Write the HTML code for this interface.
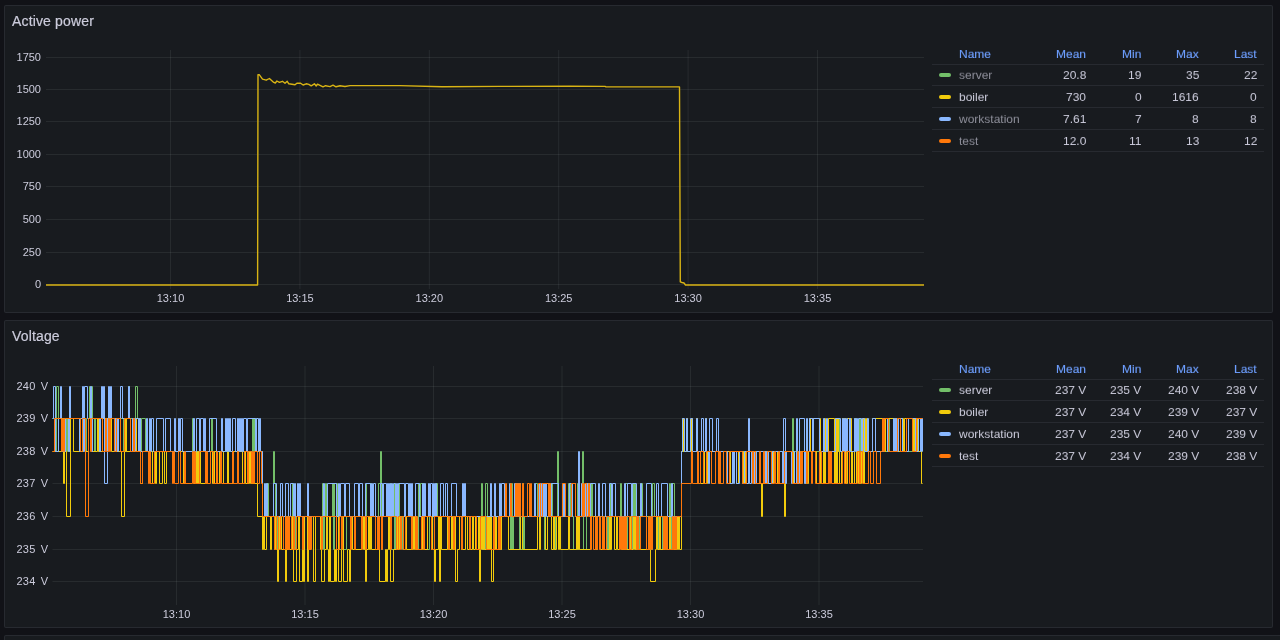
<!DOCTYPE html><html><head><meta charset="utf-8"><style>
html,body{margin:0;padding:0;}
body{width:1280px;height:640px;overflow:hidden;background:#111217;position:relative;font-family:"Liberation Sans",sans-serif;}
.lg,.title,svg{will-change:transform;}
.panel{position:absolute;left:4px;width:1269px;height:308px;box-sizing:border-box;border:1px solid rgba(204,204,220,0.09);border-radius:2px;background:#181b1f;}
.title{position:absolute;left:12px;font-size:14px;color:#ccccdc;line-height:14px;white-space:nowrap;letter-spacing:0.15px;-webkit-text-stroke:0.2px #ccccdc;}
.lg{position:absolute;font-size:12px;line-height:14px;color:#ccccdc;white-space:nowrap;transform:scaleY(0.9);transform-origin:0 11px;}
.lg.r{text-align:right;}
.hdr{color:#6e9fff;-webkit-text-stroke:0.15px #6e9fff;}
.rowline{position:absolute;left:932px;width:332px;height:1px;background:rgba(204,204,220,0.09);}
.sw{position:absolute;left:939px;width:12px;height:4px;border-radius:2px;}
svg{position:absolute;left:0;top:0;}
.ax{font-size:11px;fill:#ccccdc;font-family:"Liberation Sans",sans-serif;}
</style></head><body>

<div class="panel" style="top:5px"></div>
<div class="panel" style="top:320px"></div>
<div class="panel" style="top:635px;width:1300px"></div>
<div class="title" style="top:14px">Active power</div>
<div class="title" style="top:329px">Voltage</div>
<div class="lg hdr" style="left:959px;top:46.5px">Name</div>
<div class="lg hdr r" style="right:193.5px;top:46.5px">Mean</div>
<div class="lg hdr r" style="right:138.70000000000005px;top:46.5px">Min</div>
<div class="lg hdr r" style="right:81px;top:46.5px">Max</div>
<div class="lg hdr r" style="right:23px;top:46.5px">Last</div>
<div class="rowline" style="top:64.0px"></div>
<div class="rowline" style="top:85.0px"></div>
<div class="rowline" style="top:107.0px"></div>
<div class="rowline" style="top:129.0px"></div>
<div class="rowline" style="top:151.0px"></div>
<div class="sw" style="top:73.0px;background:#73bf69"></div>
<div class="lg" style="left:959px;top:67.8px;color:rgba(204,204,220,0.65)">server</div>
<div class="lg r" style="right:193.5px;top:67.8px">20.8</div>
<div class="lg r" style="right:138.70000000000005px;top:67.8px">19</div>
<div class="lg r" style="right:81px;top:67.8px">35</div>
<div class="lg r" style="right:23px;top:67.8px">22</div>
<div class="sw" style="top:94.9px;background:#f2cc0c"></div>
<div class="lg" style="left:959px;top:89.7px;color:#ccccdc">boiler</div>
<div class="lg r" style="right:193.5px;top:89.7px">730</div>
<div class="lg r" style="right:138.70000000000005px;top:89.7px">0</div>
<div class="lg r" style="right:81px;top:89.7px">1616</div>
<div class="lg r" style="right:23px;top:89.7px">0</div>
<div class="sw" style="top:116.8px;background:#8ab8ff"></div>
<div class="lg" style="left:959px;top:111.6px;color:rgba(204,204,220,0.65)">workstation</div>
<div class="lg r" style="right:193.5px;top:111.6px">7.61</div>
<div class="lg r" style="right:138.70000000000005px;top:111.6px">7</div>
<div class="lg r" style="right:81px;top:111.6px">8</div>
<div class="lg r" style="right:23px;top:111.6px">8</div>
<div class="sw" style="top:138.7px;background:#ff780a"></div>
<div class="lg" style="left:959px;top:133.5px;color:rgba(204,204,220,0.65)">test</div>
<div class="lg r" style="right:193.5px;top:133.5px">12.0</div>
<div class="lg r" style="right:138.70000000000005px;top:133.5px">11</div>
<div class="lg r" style="right:81px;top:133.5px">13</div>
<div class="lg r" style="right:23px;top:133.5px">12</div>
<div class="lg hdr" style="left:959px;top:361.5px">Name</div>
<div class="lg hdr r" style="right:193.5px;top:361.5px">Mean</div>
<div class="lg hdr r" style="right:138.70000000000005px;top:361.5px">Min</div>
<div class="lg hdr r" style="right:81px;top:361.5px">Max</div>
<div class="lg hdr r" style="right:23px;top:361.5px">Last</div>
<div class="rowline" style="top:379.0px"></div>
<div class="rowline" style="top:400.0px"></div>
<div class="rowline" style="top:422.0px"></div>
<div class="rowline" style="top:444.0px"></div>
<div class="rowline" style="top:466.0px"></div>
<div class="sw" style="top:388.0px;background:#73bf69"></div>
<div class="lg" style="left:959px;top:382.8px;color:#ccccdc">server</div>
<div class="lg r" style="right:193.5px;top:382.8px">237 V</div>
<div class="lg r" style="right:138.70000000000005px;top:382.8px">235 V</div>
<div class="lg r" style="right:81px;top:382.8px">240 V</div>
<div class="lg r" style="right:23px;top:382.8px">238 V</div>
<div class="sw" style="top:409.9px;background:#f2cc0c"></div>
<div class="lg" style="left:959px;top:404.7px;color:#ccccdc">boiler</div>
<div class="lg r" style="right:193.5px;top:404.7px">237 V</div>
<div class="lg r" style="right:138.70000000000005px;top:404.7px">234 V</div>
<div class="lg r" style="right:81px;top:404.7px">239 V</div>
<div class="lg r" style="right:23px;top:404.7px">237 V</div>
<div class="sw" style="top:431.8px;background:#8ab8ff"></div>
<div class="lg" style="left:959px;top:426.6px;color:#ccccdc">workstation</div>
<div class="lg r" style="right:193.5px;top:426.6px">237 V</div>
<div class="lg r" style="right:138.70000000000005px;top:426.6px">235 V</div>
<div class="lg r" style="right:81px;top:426.6px">240 V</div>
<div class="lg r" style="right:23px;top:426.6px">239 V</div>
<div class="sw" style="top:453.7px;background:#ff780a"></div>
<div class="lg" style="left:959px;top:448.5px;color:#ccccdc">test</div>
<div class="lg r" style="right:193.5px;top:448.5px">237 V</div>
<div class="lg r" style="right:138.70000000000005px;top:448.5px">234 V</div>
<div class="lg r" style="right:81px;top:448.5px">239 V</div>
<div class="lg r" style="right:23px;top:448.5px">238 V</div>
<svg width="1280" height="640" viewBox="0 0 1280 640"><line x1="46" x2="924" y1="57.5" y2="57.5" stroke="rgba(240,250,255,0.07)" stroke-width="1"/><text x="41" y="61.1" text-anchor="end" class="ax">1750</text><line x1="46" x2="924" y1="89.5" y2="89.5" stroke="rgba(240,250,255,0.07)" stroke-width="1"/><text x="41" y="93.1" text-anchor="end" class="ax">1500</text><line x1="46" x2="924" y1="121.5" y2="121.5" stroke="rgba(240,250,255,0.07)" stroke-width="1"/><text x="41" y="125.1" text-anchor="end" class="ax">1250</text><line x1="46" x2="924" y1="154.5" y2="154.5" stroke="rgba(240,250,255,0.07)" stroke-width="1"/><text x="41" y="158.1" text-anchor="end" class="ax">1000</text><line x1="46" x2="924" y1="186.5" y2="186.5" stroke="rgba(240,250,255,0.07)" stroke-width="1"/><text x="41" y="190.1" text-anchor="end" class="ax">750</text><line x1="46" x2="924" y1="219.5" y2="219.5" stroke="rgba(240,250,255,0.07)" stroke-width="1"/><text x="41" y="223.1" text-anchor="end" class="ax">500</text><line x1="46" x2="924" y1="252.5" y2="252.5" stroke="rgba(240,250,255,0.07)" stroke-width="1"/><text x="41" y="256.1" text-anchor="end" class="ax">250</text><line x1="46" x2="924" y1="284.5" y2="284.5" stroke="rgba(240,250,255,0.07)" stroke-width="1"/><text x="41" y="288.1" text-anchor="end" class="ax">0</text><line x1="170.5" x2="170.5" y1="50" y2="289" stroke="rgba(240,250,255,0.07)" stroke-width="1"/><text x="170.5" y="302" text-anchor="middle" class="ax">13:10</text><line x1="299.9" x2="299.9" y1="50" y2="289" stroke="rgba(240,250,255,0.07)" stroke-width="1"/><text x="299.9" y="302" text-anchor="middle" class="ax">13:15</text><line x1="429.3" x2="429.3" y1="50" y2="289" stroke="rgba(240,250,255,0.07)" stroke-width="1"/><text x="429.3" y="302" text-anchor="middle" class="ax">13:20</text><line x1="558.7" x2="558.7" y1="50" y2="289" stroke="rgba(240,250,255,0.07)" stroke-width="1"/><text x="558.7" y="302" text-anchor="middle" class="ax">13:25</text><line x1="688.1" x2="688.1" y1="50" y2="289" stroke="rgba(240,250,255,0.07)" stroke-width="1"/><text x="688.1" y="302" text-anchor="middle" class="ax">13:30</text><line x1="817.5" x2="817.5" y1="50" y2="289" stroke="rgba(240,250,255,0.07)" stroke-width="1"/><text x="817.5" y="302" text-anchor="middle" class="ax">13:35</text><path d="M46.0,285.0 L257.6,285.0 L258.0,74.6 L259.4,74.8 L262.5,79.1 L266.2,80.2 L269.4,78.5 L273.8,82.4 L275.3,83.0 L276.9,81.0 L279.4,82.4 L282.5,81.3 L285.0,83.2 L287.2,81.3 L288.8,83.8 L295.0,84.8 L296.9,83.2 L300.6,83.2 L303.1,85.0 L306.2,83.8 L308.8,84.4 L311.2,85.9 L314.4,83.8 L316.2,86.0 L317.5,84.1 L323.0,86.9 L325.6,85.7 L330.0,86.6 L333.0,85.2 L336.0,86.8 L340.0,85.8 L345.0,86.5 L350.0,85.6 L400.0,85.6 L442.0,86.8 L500.0,86.4 L570.0,86.2 L605.0,86.4 L606.0,86.9 L679.5,86.9 L680.3,281.8 L682.0,282.5 L684.0,283.0 L685.5,285.0 L924.0,285.0" fill="none" stroke="#d9b414" stroke-width="1.4" stroke-linejoin="round"/><line x1="52.5" x2="923" y1="386.5" y2="386.5" stroke="rgba(240,250,255,0.07)" stroke-width="1"/><text x="48.3" y="389.9" text-anchor="end" class="ax" style="letter-spacing:0.3px;word-spacing:1.6px">240 V</text><line x1="52.5" x2="923" y1="418.5" y2="418.5" stroke="rgba(240,250,255,0.07)" stroke-width="1"/><text x="48.3" y="421.9" text-anchor="end" class="ax" style="letter-spacing:0.3px;word-spacing:1.6px">239 V</text><line x1="52.5" x2="923" y1="451.5" y2="451.5" stroke="rgba(240,250,255,0.07)" stroke-width="1"/><text x="48.3" y="454.9" text-anchor="end" class="ax" style="letter-spacing:0.3px;word-spacing:1.6px">238 V</text><line x1="52.5" x2="923" y1="483.5" y2="483.5" stroke="rgba(240,250,255,0.07)" stroke-width="1"/><text x="48.3" y="486.9" text-anchor="end" class="ax" style="letter-spacing:0.3px;word-spacing:1.6px">237 V</text><line x1="52.5" x2="923" y1="516.5" y2="516.5" stroke="rgba(240,250,255,0.07)" stroke-width="1"/><text x="48.3" y="519.9" text-anchor="end" class="ax" style="letter-spacing:0.3px;word-spacing:1.6px">236 V</text><line x1="52.5" x2="923" y1="549.5" y2="549.5" stroke="rgba(240,250,255,0.07)" stroke-width="1"/><text x="48.3" y="552.9" text-anchor="end" class="ax" style="letter-spacing:0.3px;word-spacing:1.6px">235 V</text><line x1="52.5" x2="923" y1="581.5" y2="581.5" stroke="rgba(240,250,255,0.07)" stroke-width="1"/><text x="48.3" y="584.9" text-anchor="end" class="ax" style="letter-spacing:0.3px;word-spacing:1.6px">234 V</text><line x1="176.5" x2="176.5" y1="366" y2="605" stroke="rgba(240,250,255,0.07)" stroke-width="1"/><text x="176.5" y="618" text-anchor="middle" class="ax">13:10</text><line x1="305.0" x2="305.0" y1="366" y2="605" stroke="rgba(240,250,255,0.07)" stroke-width="1"/><text x="305.0" y="618" text-anchor="middle" class="ax">13:15</text><line x1="433.5" x2="433.5" y1="366" y2="605" stroke="rgba(240,250,255,0.07)" stroke-width="1"/><text x="433.5" y="618" text-anchor="middle" class="ax">13:20</text><line x1="562.0" x2="562.0" y1="366" y2="605" stroke="rgba(240,250,255,0.07)" stroke-width="1"/><text x="562.0" y="618" text-anchor="middle" class="ax">13:25</text><line x1="690.5" x2="690.5" y1="366" y2="605" stroke="rgba(240,250,255,0.07)" stroke-width="1"/><text x="690.5" y="618" text-anchor="middle" class="ax">13:30</text><line x1="819.0" x2="819.0" y1="366" y2="605" stroke="rgba(240,250,255,0.07)" stroke-width="1"/><text x="819.0" y="618" text-anchor="middle" class="ax">13:35</text><g fill="none" stroke-width="1"><path d="M52.5,418.5H54.5V451.5H56.5V386.5H58.5V451.5H58.5V418.5H61.5V451.5H62.5V418.5H66.5V451.5H67.5V418.5H68.5V451.5H70.5V418.5H86.5V451.5H88.5V418.5H89.5V386.5H90.5V418.5H91.5V386.5H92.5V418.5H94.5V451.5H95.5V418.5H98.5V451.5H99.5V418.5H123.5V451.5H126.5V418.5H128.5V386.5H129.5V418.5H135.5V386.5H137.5V418.5H140.5V451.5H141.5V418.5H145.5V451.5H192.5V418.5H193.5V451.5H211.5V418.5H212.5V451.5H252.5V418.5H253.5V451.5H254.5V418.5H256.5V451.5H262.5V516.5H266.5V483.5H268.5V516.5H273.5V451.5H274.5V483.5H275.5V516.5H277.5V549.5H279.5V516.5H292.5V483.5H293.5V549.5H295.5V516.5H322.5V483.5H323.5V549.5H324.5V516.5H325.5V483.5H326.5V516.5H332.5V483.5H333.5V549.5H334.5V483.5H337.5V516.5H338.5V549.5H341.5V516.5H342.5V549.5H346.5V516.5H364.5V549.5H365.5V516.5H366.5V483.5H371.5V516.5H378.5V483.5H380.5V451.5H381.5V549.5H382.5V516.5H390.5V483.5H391.5V549.5H394.5V483.5H395.5V549.5H396.5V516.5H398.5V483.5H399.5V516.5H402.5V549.5H403.5V516.5H416.5V549.5H418.5V483.5H419.5V516.5H420.5V483.5H424.5V549.5H429.5V516.5H435.5V483.5H437.5V516.5H481.5V483.5H482.5V549.5H485.5V483.5H487.5V549.5H491.5V516.5H498.5V549.5H501.5V516.5H510.5V549.5H511.5V483.5H512.5V549.5H513.5V516.5H519.5V549.5H522.5V483.5H523.5V549.5H524.5V516.5H535.5V483.5H537.5V516.5H543.5V483.5H544.5V549.5H545.5V483.5H549.5V516.5H550.5V483.5H552.5V516.5H553.5V549.5H555.5V516.5H557.5V451.5H558.5V516.5H568.5V483.5H570.5V516.5H573.5V549.5H577.5V483.5H578.5V549.5H579.5V516.5H582.5V451.5H583.5V549.5H586.5V483.5H590.5V516.5H591.5V483.5H592.5V516.5H595.5V549.5H596.5V516.5H607.5V549.5H608.5V516.5H609.5V549.5H610.5V483.5H611.5V516.5H620.5V483.5H621.5V516.5H622.5V549.5H623.5V516.5H624.5V549.5H625.5V483.5H627.5V549.5H632.5V483.5H633.5V516.5H634.5V483.5H635.5V549.5H636.5V516.5H639.5V549.5H640.5V483.5H642.5V516.5H651.5V549.5H652.5V483.5H654.5V516.5H658.5V549.5H662.5V516.5H667.5V549.5H669.5V483.5H670.5V549.5H671.5V483.5H674.5V549.5H676.5V516.5H681.5V451.5H792.5V418.5H793.5V451.5H838.5V418.5H839.5V451.5H854.5V418.5H856.5V451.5H859.5V418.5H860.5V451.5H887.5V418.5H889.5V451.5H922.5" stroke="#73bf69"/><path d="M52.5,451.5H62.5V418.5H63.5V483.5H64.5V451.5H66.5V516.5H70.5V418.5H73.5V451.5H83.5V418.5H85.5V451.5H88.5V418.5H91.5V451.5H97.5V418.5H98.5V451.5H104.5V418.5H111.5V451.5H121.5V516.5H124.5V418.5H124.5V451.5H125.5V418.5H126.5V451.5H135.5V418.5H136.5V451.5H139.5V418.5H140.5V483.5H142.5V451.5H150.5V483.5H152.5V451.5H155.5V483.5H156.5V451.5H159.5V483.5H162.5V451.5H164.5V483.5H166.5V451.5H183.5V483.5H185.5V451.5H193.5V483.5H195.5V451.5H196.5V483.5H197.5V451.5H198.5V483.5H199.5V451.5H200.5V483.5H205.5V451.5H206.5V483.5H207.5V451.5H212.5V483.5H214.5V451.5H216.5V483.5H219.5V451.5H223.5V483.5H227.5V451.5H228.5V483.5H233.5V451.5H242.5V483.5H244.5V451.5H245.5V483.5H249.5V451.5H250.5V483.5H257.5V516.5H262.5V549.5H263.5V516.5H264.5V549.5H266.5V516.5H270.5V549.5H271.5V516.5H274.5V549.5H275.5V516.5H276.5V549.5H277.5V581.5H278.5V549.5H279.5V516.5H281.5V549.5H285.5V581.5H286.5V549.5H288.5V516.5H289.5V549.5H292.5V516.5H293.5V581.5H296.5V549.5H298.5V516.5H299.5V581.5H302.5V549.5H303.5V581.5H304.5V516.5H307.5V581.5H308.5V516.5H309.5V549.5H310.5V516.5H313.5V581.5H315.5V516.5H320.5V549.5H321.5V581.5H324.5V549.5H326.5V516.5H327.5V549.5H328.5V581.5H329.5V516.5H330.5V581.5H334.5V549.5H335.5V581.5H336.5V516.5H338.5V581.5H341.5V549.5H342.5V516.5H343.5V581.5H347.5V549.5H349.5V581.5H350.5V516.5H352.5V549.5H361.5V516.5H363.5V549.5H364.5V516.5H365.5V581.5H366.5V549.5H368.5V516.5H369.5V549.5H370.5V516.5H371.5V549.5H378.5V516.5H379.5V581.5H385.5V549.5H386.5V581.5H387.5V549.5H388.5V516.5H389.5V549.5H390.5V581.5H393.5V549.5H396.5V516.5H397.5V549.5H399.5V516.5H403.5V549.5H405.5V516.5H406.5V549.5H413.5V516.5H414.5V549.5H415.5V516.5H416.5V549.5H422.5V516.5H423.5V549.5H427.5V516.5H431.5V549.5H432.5V516.5H434.5V581.5H435.5V549.5H438.5V516.5H439.5V581.5H440.5V516.5H441.5V549.5H447.5V516.5H448.5V549.5H451.5V516.5H452.5V549.5H454.5V516.5H455.5V581.5H457.5V549.5H459.5V516.5H461.5V549.5H465.5V516.5H467.5V549.5H472.5V516.5H473.5V549.5H475.5V516.5H476.5V549.5H478.5V516.5H479.5V581.5H480.5V549.5H481.5V516.5H482.5V549.5H483.5V516.5H484.5V549.5H486.5V516.5H487.5V549.5H488.5V516.5H489.5V549.5H490.5V516.5H491.5V581.5H493.5V549.5H495.5V516.5H496.5V549.5H499.5V516.5H500.5V549.5H501.5V516.5H508.5V549.5H520.5V516.5H522.5V549.5H537.5V516.5H539.5V549.5H540.5V516.5H545.5V549.5H547.5V516.5H551.5V549.5H553.5V516.5H554.5V549.5H556.5V516.5H558.5V549.5H559.5V516.5H560.5V549.5H568.5V516.5H569.5V549.5H576.5V516.5H577.5V549.5H578.5V516.5H579.5V549.5H590.5V516.5H596.5V549.5H597.5V516.5H600.5V549.5H609.5V516.5H610.5V549.5H611.5V516.5H614.5V549.5H616.5V516.5H617.5V549.5H619.5V516.5H621.5V549.5H630.5V516.5H631.5V549.5H633.5V516.5H634.5V549.5H635.5V516.5H636.5V549.5H637.5V516.5H638.5V549.5H648.5V516.5H649.5V549.5H650.5V581.5H655.5V549.5H656.5V516.5H657.5V549.5H659.5V516.5H660.5V549.5H665.5V516.5H666.5V549.5H669.5V516.5H670.5V549.5H672.5V516.5H673.5V549.5H676.5V516.5H677.5V549.5H678.5V516.5H679.5V549.5H681.5V451.5H682.5V418.5H683.5V451.5H686.5V418.5H687.5V451.5H691.5V418.5H692.5V451.5H696.5V418.5H697.5V483.5H698.5V451.5H700.5V483.5H704.5V451.5H705.5V418.5H706.5V483.5H707.5V451.5H719.5V483.5H720.5V451.5H730.5V483.5H732.5V451.5H736.5V483.5H738.5V451.5H743.5V483.5H745.5V451.5H746.5V483.5H748.5V451.5H753.5V483.5H754.5V451.5H756.5V483.5H761.5V516.5H762.5V483.5H764.5V451.5H766.5V483.5H768.5V451.5H771.5V483.5H773.5V451.5H777.5V483.5H784.5V516.5H785.5V451.5H793.5V483.5H796.5V451.5H797.5V483.5H801.5V451.5H805.5V483.5H806.5V451.5H807.5V483.5H808.5V451.5H809.5V418.5H810.5V451.5H812.5V418.5H813.5V451.5H816.5V483.5H819.5V418.5H820.5V483.5H821.5V451.5H823.5V483.5H824.5V418.5H825.5V483.5H828.5V418.5H834.5V483.5H835.5V418.5H836.5V483.5H837.5V418.5H838.5V451.5H839.5V483.5H841.5V451.5H842.5V418.5H843.5V451.5H844.5V418.5H845.5V483.5H847.5V418.5H851.5V483.5H852.5V451.5H854.5V483.5H856.5V451.5H858.5V483.5H861.5V451.5H862.5V418.5H863.5V483.5H864.5V418.5H865.5V451.5H866.5V418.5H867.5V451.5H872.5V418.5H883.5V451.5H885.5V418.5H887.5V451.5H888.5V418.5H894.5V451.5H895.5V418.5H896.5V451.5H900.5V418.5H903.5V451.5H904.5V418.5H913.5V451.5H914.5V418.5H917.5V451.5H920.5V418.5H921.5V483.5H922.5" stroke="#f2cc0c"/><path d="M52.5,418.5H53.5V386.5H55.5V418.5H55.5V451.5H58.5V418.5H60.5V386.5H61.5V418.5H61.5V451.5H65.5V418.5H68.5V451.5H69.5V386.5H70.5V418.5H79.5V451.5H80.5V418.5H82.5V386.5H83.5V451.5H84.5V386.5H87.5V418.5H90.5V386.5H91.5V451.5H92.5V418.5H99.5V451.5H100.5V418.5H101.5V386.5H102.5V418.5H103.5V386.5H104.5V483.5H107.5V451.5H107.5V418.5H108.5V386.5H109.5V418.5H110.5V386.5H111.5V418.5H114.5V451.5H115.5V418.5H117.5V451.5H118.5V418.5H120.5V386.5H122.5V418.5H128.5V386.5H129.5V418.5H130.5V451.5H132.5V418.5H134.5V451.5H135.5V418.5H138.5V451.5H139.5V418.5H140.5V451.5H146.5V418.5H147.5V451.5H149.5V418.5H150.5V451.5H151.5V418.5H153.5V451.5H156.5V418.5H163.5V451.5H165.5V418.5H170.5V451.5H174.5V418.5H175.5V451.5H178.5V418.5H179.5V451.5H180.5V418.5H182.5V451.5H193.5V418.5H194.5V451.5H196.5V418.5H199.5V451.5H200.5V418.5H203.5V451.5H204.5V418.5H205.5V451.5H209.5V418.5H216.5V451.5H221.5V418.5H222.5V451.5H225.5V418.5H226.5V451.5H227.5V418.5H228.5V451.5H229.5V418.5H230.5V451.5H232.5V418.5H235.5V451.5H237.5V418.5H238.5V451.5H239.5V418.5H240.5V451.5H241.5V418.5H242.5V451.5H243.5V418.5H246.5V451.5H247.5V418.5H255.5V451.5H256.5V418.5H258.5V451.5H259.5V418.5H260.5V451.5H262.5V516.5H264.5V483.5H265.5V516.5H266.5V483.5H267.5V516.5H273.5V483.5H276.5V516.5H280.5V483.5H282.5V516.5H285.5V483.5H288.5V516.5H290.5V483.5H293.5V516.5H294.5V483.5H295.5V516.5H297.5V483.5H298.5V516.5H299.5V483.5H300.5V516.5H307.5V483.5H308.5V516.5H323.5V483.5H324.5V516.5H327.5V483.5H336.5V516.5H338.5V483.5H339.5V516.5H340.5V483.5H344.5V516.5H345.5V483.5H349.5V516.5H354.5V483.5H358.5V516.5H359.5V483.5H362.5V516.5H365.5V483.5H370.5V516.5H371.5V483.5H372.5V516.5H373.5V483.5H375.5V516.5H380.5V483.5H382.5V516.5H383.5V483.5H386.5V516.5H387.5V483.5H388.5V516.5H389.5V483.5H390.5V516.5H391.5V483.5H392.5V516.5H393.5V483.5H395.5V516.5H396.5V483.5H397.5V516.5H398.5V483.5H404.5V516.5H405.5V483.5H408.5V516.5H409.5V483.5H410.5V516.5H411.5V483.5H412.5V516.5H415.5V483.5H419.5V516.5H422.5V483.5H423.5V516.5H424.5V483.5H425.5V516.5H428.5V483.5H429.5V516.5H430.5V483.5H432.5V516.5H433.5V483.5H434.5V516.5H435.5V483.5H436.5V516.5H440.5V483.5H443.5V516.5H445.5V483.5H447.5V516.5H451.5V483.5H456.5V516.5H462.5V483.5H463.5V516.5H464.5V483.5H465.5V516.5H490.5V483.5H491.5V516.5H494.5V483.5H495.5V516.5H499.5V483.5H500.5V516.5H501.5V483.5H504.5V516.5H509.5V483.5H510.5V516.5H514.5V483.5H516.5V516.5H517.5V483.5H518.5V516.5H519.5V483.5H520.5V516.5H534.5V483.5H535.5V516.5H539.5V483.5H540.5V516.5H541.5V483.5H542.5V516.5H543.5V483.5H544.5V516.5H545.5V483.5H546.5V516.5H548.5V483.5H549.5V516.5H551.5V483.5H558.5V516.5H563.5V483.5H564.5V516.5H569.5V483.5H571.5V516.5H572.5V483.5H575.5V516.5H578.5V451.5H579.5V516.5H581.5V483.5H582.5V516.5H585.5V483.5H586.5V516.5H587.5V483.5H589.5V516.5H590.5V483.5H595.5V516.5H598.5V483.5H599.5V516.5H602.5V483.5H605.5V516.5H609.5V483.5H611.5V516.5H612.5V483.5H615.5V516.5H624.5V483.5H625.5V516.5H627.5V483.5H631.5V516.5H632.5V483.5H636.5V516.5H640.5V483.5H641.5V516.5H646.5V483.5H651.5V516.5H656.5V483.5H658.5V516.5H661.5V483.5H667.5V516.5H671.5V483.5H672.5V516.5H681.5V451.5H682.5V418.5H684.5V451.5H686.5V418.5H687.5V451.5H690.5V418.5H692.5V451.5H696.5V418.5H697.5V451.5H701.5V418.5H703.5V451.5H705.5V418.5H706.5V451.5H708.5V483.5H709.5V418.5H712.5V451.5H716.5V418.5H718.5V451.5H727.5V483.5H732.5V451.5H733.5V483.5H734.5V451.5H736.5V483.5H739.5V451.5H742.5V483.5H744.5V451.5H746.5V483.5H748.5V418.5H749.5V483.5H751.5V451.5H754.5V483.5H756.5V451.5H765.5V483.5H766.5V451.5H768.5V483.5H772.5V451.5H782.5V483.5H783.5V418.5H785.5V483.5H786.5V451.5H791.5V483.5H792.5V451.5H794.5V483.5H796.5V418.5H797.5V483.5H799.5V418.5H804.5V483.5H805.5V451.5H806.5V418.5H807.5V451.5H809.5V418.5H812.5V451.5H813.5V418.5H819.5V451.5H823.5V418.5H824.5V451.5H826.5V418.5H827.5V451.5H835.5V418.5H840.5V451.5H842.5V418.5H843.5V451.5H844.5V418.5H845.5V451.5H846.5V418.5H847.5V451.5H849.5V418.5H850.5V451.5H854.5V418.5H855.5V451.5H856.5V418.5H857.5V451.5H858.5V418.5H861.5V451.5H862.5V418.5H864.5V451.5H867.5V418.5H868.5V451.5H872.5V418.5H875.5V451.5H883.5V418.5H887.5V451.5H893.5V418.5H894.5V451.5H895.5V418.5H896.5V451.5H898.5V418.5H902.5V451.5H908.5V418.5H915.5V451.5H918.5V418.5H920.5V451.5H921.5V418.5H922.5V451.5H922.5" stroke="#8ab8ff"/><path d="M52.5,451.5H54.5V418.5H61.5V451.5H62.5V418.5H63.5V451.5H64.5V418.5H80.5V451.5H82.5V418.5H85.5V516.5H88.5V418.5H90.5V451.5H91.5V418.5H102.5V451.5H105.5V418.5H106.5V451.5H108.5V418.5H109.5V451.5H110.5V418.5H114.5V451.5H116.5V418.5H120.5V451.5H124.5V418.5H130.5V451.5H133.5V418.5H134.5V451.5H140.5V483.5H142.5V451.5H148.5V483.5H149.5V451.5H150.5V483.5H154.5V451.5H172.5V483.5H173.5V451.5H174.5V483.5H178.5V451.5H180.5V483.5H184.5V451.5H185.5V483.5H192.5V451.5H193.5V483.5H194.5V451.5H195.5V483.5H199.5V451.5H205.5V483.5H206.5V451.5H207.5V483.5H210.5V451.5H213.5V483.5H216.5V451.5H217.5V483.5H220.5V451.5H221.5V483.5H232.5V451.5H233.5V483.5H237.5V451.5H238.5V483.5H244.5V451.5H247.5V483.5H248.5V451.5H251.5V483.5H252.5V451.5H253.5V483.5H254.5V451.5H257.5V483.5H259.5V451.5H261.5V483.5H262.5V516.5H274.5V549.5H276.5V516.5H278.5V549.5H280.5V516.5H283.5V549.5H285.5V516.5H286.5V549.5H287.5V516.5H288.5V549.5H289.5V516.5H291.5V549.5H293.5V516.5H294.5V549.5H296.5V516.5H302.5V549.5H303.5V516.5H308.5V549.5H309.5V516.5H310.5V549.5H311.5V516.5H321.5V549.5H322.5V516.5H336.5V549.5H339.5V516.5H341.5V549.5H342.5V516.5H350.5V549.5H351.5V516.5H354.5V549.5H355.5V516.5H361.5V549.5H362.5V516.5H365.5V549.5H366.5V516.5H375.5V549.5H377.5V516.5H378.5V549.5H379.5V516.5H381.5V549.5H382.5V516.5H390.5V549.5H391.5V516.5H396.5V549.5H398.5V516.5H400.5V549.5H401.5V516.5H403.5V549.5H405.5V516.5H411.5V549.5H412.5V516.5H415.5V549.5H416.5V516.5H417.5V549.5H421.5V516.5H423.5V549.5H424.5V516.5H431.5V549.5H434.5V516.5H448.5V549.5H449.5V516.5H453.5V549.5H454.5V516.5H461.5V549.5H462.5V516.5H469.5V549.5H470.5V516.5H476.5V549.5H480.5V516.5H486.5V549.5H493.5V516.5H494.5V549.5H498.5V516.5H499.5V549.5H500.5V516.5H505.5V483.5H506.5V516.5H510.5V483.5H511.5V516.5H515.5V483.5H516.5V516.5H517.5V483.5H518.5V516.5H519.5V483.5H520.5V516.5H522.5V483.5H523.5V516.5H527.5V483.5H529.5V516.5H530.5V483.5H531.5V516.5H538.5V483.5H540.5V516.5H542.5V483.5H548.5V516.5H549.5V483.5H550.5V516.5H562.5V483.5H565.5V516.5H571.5V483.5H575.5V516.5H582.5V483.5H583.5V516.5H584.5V483.5H586.5V516.5H588.5V483.5H589.5V516.5H590.5V549.5H591.5V516.5H593.5V549.5H595.5V516.5H596.5V549.5H597.5V516.5H599.5V549.5H600.5V516.5H602.5V549.5H603.5V516.5H604.5V549.5H606.5V516.5H619.5V549.5H620.5V516.5H621.5V549.5H622.5V516.5H623.5V549.5H624.5V516.5H625.5V549.5H626.5V516.5H629.5V549.5H631.5V516.5H636.5V549.5H637.5V516.5H638.5V549.5H640.5V516.5H646.5V549.5H648.5V516.5H649.5V549.5H650.5V516.5H651.5V549.5H652.5V516.5H663.5V549.5H664.5V516.5H665.5V549.5H666.5V516.5H667.5V549.5H672.5V516.5H673.5V549.5H674.5V516.5H675.5V549.5H676.5V516.5H681.5V483.5H691.5V451.5H692.5V483.5H697.5V451.5H698.5V483.5H700.5V451.5H703.5V483.5H706.5V451.5H711.5V483.5H715.5V451.5H718.5V483.5H719.5V451.5H720.5V483.5H723.5V451.5H726.5V483.5H729.5V451.5H742.5V483.5H746.5V451.5H752.5V483.5H753.5V451.5H755.5V483.5H759.5V451.5H760.5V483.5H763.5V451.5H764.5V483.5H767.5V451.5H771.5V483.5H774.5V451.5H775.5V483.5H778.5V451.5H779.5V483.5H784.5V451.5H792.5V483.5H797.5V451.5H798.5V483.5H800.5V451.5H801.5V483.5H802.5V451.5H806.5V483.5H807.5V451.5H811.5V483.5H812.5V451.5H815.5V483.5H819.5V451.5H821.5V483.5H828.5V451.5H829.5V483.5H830.5V451.5H831.5V483.5H842.5V451.5H844.5V483.5H846.5V451.5H849.5V483.5H857.5V451.5H859.5V483.5H860.5V451.5H862.5V483.5H868.5V451.5H870.5V483.5H873.5V451.5H876.5V483.5H880.5V451.5H882.5V418.5H883.5V451.5H884.5V418.5H888.5V451.5H897.5V418.5H900.5V451.5H906.5V418.5H912.5V451.5H916.5V418.5H922.5" stroke="#ff780a"/></g></svg>
</body></html>
